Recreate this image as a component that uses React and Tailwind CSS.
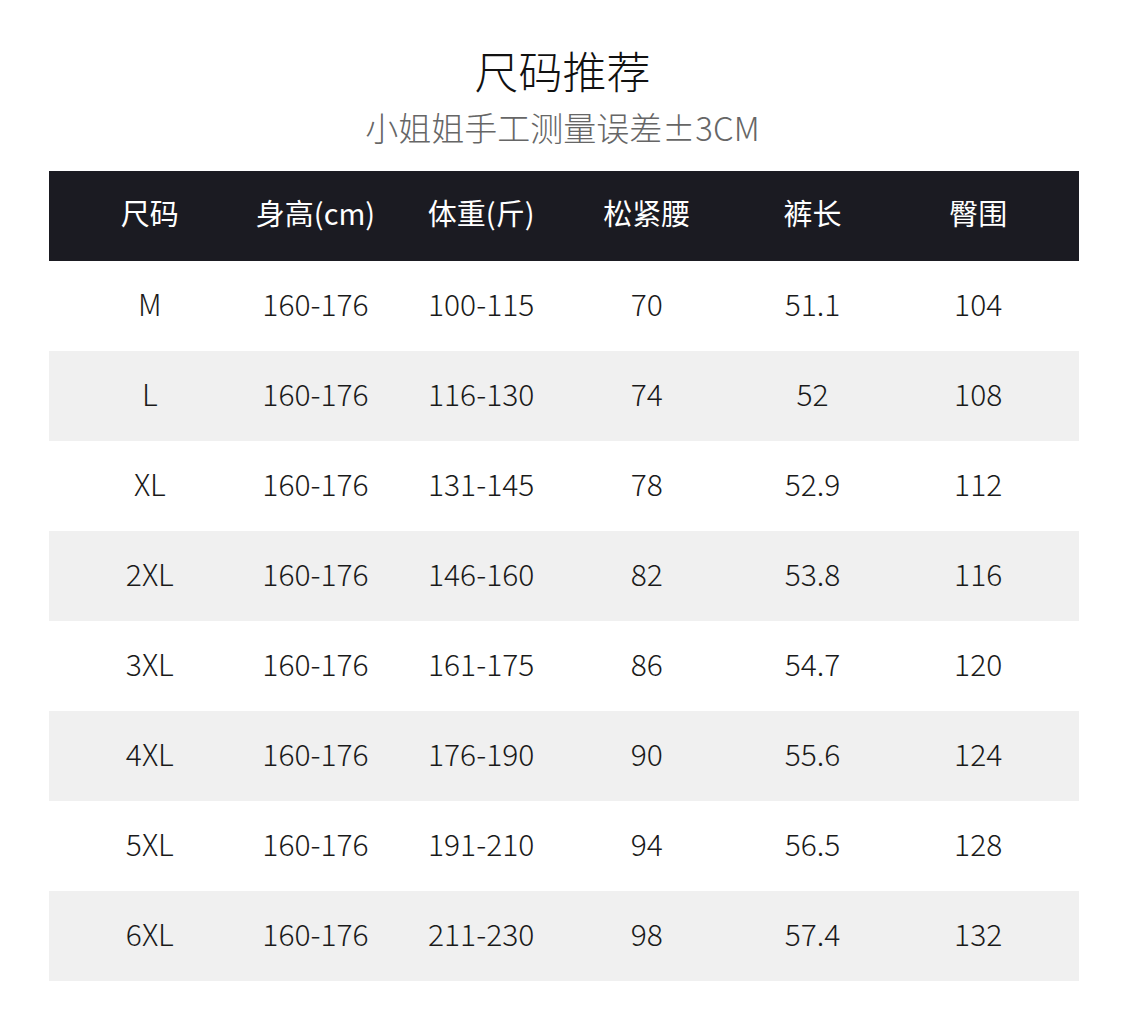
import React from "react";

const headers = ["尺码", "身高(cm)", "体重(斤)", "松紧腰", "裤长", "臀围"];
const rows = [
  ["M", "160-176", "100-115", "70", "51.1", "104"],
  ["L", "160-176", "116-130", "74", "52", "108"],
  ["XL", "160-176", "131-145", "78", "52.9", "112"],
  ["2XL", "160-176", "146-160", "82", "53.8", "116"],
  ["3XL", "160-176", "161-175", "86", "54.7", "120"],
  ["4XL", "160-176", "176-190", "90", "55.6", "124"],
  ["5XL", "160-176", "191-210", "94", "56.5", "128"],
  ["6XL", "160-176", "211-230", "98", "57.4", "132"],
];

export default function App() {
  return (
    <div
      className="w-[1125px] h-[1027px] bg-white overflow-hidden"
      style={{ fontFamily: '"Noto Sans CJK SC", "Noto Sans", sans-serif' }}
    >
      <div className="pt-[40px] flex flex-col items-center">
        <div className="h-[60px] leading-[60px] text-[44px] text-[#111] font-light">尺码推荐</div>
        <div className="mt-[7px] h-[40px] leading-[40px] text-[33px] text-[#666] font-light">小姐姐手工测量误差±3CM</div>
      </div>
      <div className="mt-[24px] mx-[49px] w-[1030px]">
        <div className="h-[90px] bg-[#1b1b22] px-[18px] pb-[7px] grid grid-cols-6 items-center">
          {headers.map((h) => (
            <div key={h} className="text-center text-white text-[29px] font-normal">
              {h}
            </div>
          ))}
        </div>
        {rows.map((r, i) => (
          <div
            key={r[0]}
            className={`h-[90px] px-[18px] pb-[5px] grid grid-cols-6 items-center ${i % 2 === 1 ? "bg-[#f0f0f0]" : "bg-white"}`}
          >
            {r.map((c, j) => (
              <div key={j} className="text-center text-[#1a1a1a] text-[30px] font-light">
                {c}
              </div>
            ))}
          </div>
        ))}
      </div>
    </div>
  );
}
